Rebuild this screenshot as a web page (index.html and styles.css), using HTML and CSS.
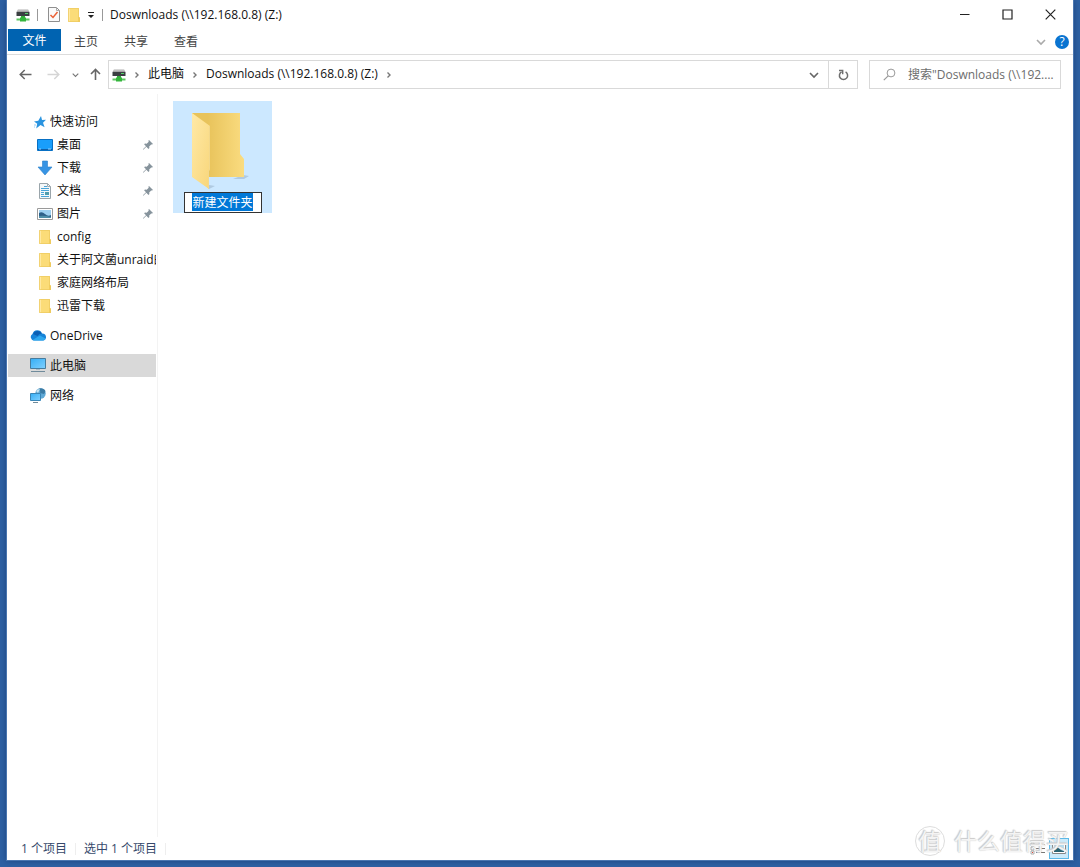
FILE: index.html
```html
<!DOCTYPE html>
<html lang="zh-CN">
<head>
<meta charset="utf-8">
<meta name="viewport" content="width=device-width, initial-scale=1">
<title>Doswnloads (\\192.168.0.8) (Z:)</title>
<link rel="stylesheet" href="styles.css">
</head>
<body>
<svg class="defs" aria-hidden="true">
  <defs>
    <linearGradient id="g-cap" x1="0" y1="0" x2="0" y2="1"><stop offset="0" stop-color="#e4e4e4"/><stop offset="1" stop-color="#9a9a9a"/></linearGradient>
    <linearGradient id="g-screen" x1="0" y1="0" x2="1" y2="1"><stop offset="0" stop-color="#35aef5"/><stop offset="1" stop-color="#7fd0ff"/></linearGradient>
    <linearGradient id="g-back" x1="0" y1="0" x2="1" y2="0"><stop offset="0.300" stop-color="#e8c35b"/><stop offset="1" stop-color="#fadc80"/></linearGradient>
    <linearGradient id="g-flap" x1="0" y1="0" x2="1" y2="1"><stop offset="0" stop-color="#ffe9a6"/><stop offset="1" stop-color="#f8d67a"/></linearGradient>
    <symbol id="drive" viewBox="0 0 14 14">
      <path d="M2 1h10l1.500 3H.5z" fill="url(#g-cap)"/><rect x=".5" y="4" width="13" height="4" fill="#3b3f42"/><rect x="9" y="5" width="3" height="1" fill="#54d36a"/>
      <rect x="5" y="8" width="4" height="2" fill="#35ad3d"/><rect x=".5" y="10.500" width="13" height="2" fill="#5cc760"/><rect x="4" y="9.500" width="6" height="4" fill="#35b53d"/>
    </symbol>
    <symbol id="folder" viewBox="0 0 14 16">
      <path d="M1 1h11v9l1 1v4H1z" fill="#fbdc78"/><path d="M1 1h2v14H1z" fill="#ffe9a3"/><path d="M11 10h1l1 1v4h-2z" fill="#f2cc5d"/><path d="M1.500 1.500h10v8.500l1 1v3.500h-11z" fill="none" stroke="#edc95f" stroke-width=".7"/>
    </symbol>
    <symbol id="pin" viewBox="0 0 10 10">
      <path d="M6 0l4 4-1 .6-.8-.2-2 2 .2 1.600-.9.900L3.300 6.700.6 9.600 0 9.700l.2-.8L3 6.200 1.100 4.300 2 3.500l1.700.2 2-2L5.400.8z" fill="#86939c"/>
    </symbol>
    <symbol id="chev-right" viewBox="0 0 6 8"><path d="M1.500 1.500L4 4 1.500 6.500" fill="none" stroke="#777" stroke-width="1.400"/></symbol>
    <symbol id="chev-down" viewBox="0 0 10 8"><path d="M1 2l4 4 4-4" fill="none" stroke="currentColor" stroke-width="1.600"/></symbol>
  </defs>
</svg>

<div class="window">
  <header class="titlebar">
    <svg class="ic14"><use href="#drive"/></svg>
    <span class="divider"></span>
    <button class="quick" aria-label="属性">
      <svg width="12" height="15" viewBox="0 0 12 15"><path d="M.5.500h8l3 3v11H.5z" fill="#fafafa" stroke="#8f8f8f"/><path d="M8.500.500v3h3" fill="none" stroke="#aaa"/><path d="M2.500 8l2.500 2.500L9.500 5" fill="none" stroke="#ea6136" stroke-width="1.500"/></svg>
    </button>
    <button class="quick" aria-label="新建文件夹"><svg width="14" height="16"><use href="#folder"/></svg></button>
    <button class="quick" aria-label="自定义快速访问工具栏"><svg width="8" height="8" viewBox="0 0 8 8"><path d="M1 1h6v1H1zM1 4h6L4 7z" fill="#222"/></svg></button>
    <span class="divider"></span>
    <h1 class="title">Doswnloads (\\192.168.0.8) (Z:)</h1>
    <div class="caption">
      <button aria-label="最小化"><svg width="11" height="11" viewBox="0 0 11 11"><path d="M1 5.500h9.500" stroke="#222" fill="none"/></svg></button>
      <button aria-label="最大化"><svg width="11" height="11" viewBox="0 0 11 11"><path d="M1 1h9v9H1z" stroke="#222" stroke-width="1.200" fill="none"/></svg></button>
      <button aria-label="关闭"><svg width="11" height="11" viewBox="0 0 11 11"><path d="M.7.700l9.600 9.600M10.300.700L.7 10.300" stroke="#222" stroke-width="1.200" fill="none"/></svg></button>
    </div>
  </header>

  <nav class="ribbon">
    <button class="tab tab-file">文件</button>
    <button class="tab">主页</button>
    <button class="tab">共享</button>
    <button class="tab">查看</button>
    <div class="ribbon-end">
      <button class="expand" aria-label="展开功能区"><svg width="10" height="8"><use href="#chev-down"/></svg></button>
      <button class="help" aria-label="帮助">?</button>
    </div>
  </nav>

  <div class="navrow">
    <button class="nav-back" aria-label="后退"><svg width="13" height="11" viewBox="0 0 13 11"><path d="M12.500 5.500H1.500M5.700 1L1.200 5.500 5.700 10" fill="none" stroke="#666" stroke-width="1.500"/></svg></button>
    <button class="nav-next" aria-label="前进"><svg width="13" height="11" viewBox="0 0 13 11"><path d="M.5 5.500h11M7.300 1l4.500 4.500L7.300 10" fill="none" stroke="#d5d5d5" stroke-width="1.500"/></svg></button>
    <button class="nav-recent" aria-label="最近浏览的位置"><svg width="7" height="6"><use href="#chev-down"/></svg></button>
    <button class="nav-up" aria-label="上移"><svg width="11" height="13" viewBox="0 0 11 13"><path d="M5.500 12V1.500M1 6l4.500-4.500L10 6" fill="none" stroke="#666" stroke-width="1.600"/></svg></button>
    <div class="address">
      <svg class="ic14"><use href="#drive"/></svg>
      <svg class="sep"><use href="#chev-right"/></svg>
      <button class="crumb">此电脑</button>
      <svg class="sep"><use href="#chev-right"/></svg>
      <button class="crumb">Doswnloads (\\192.168.0.8) (Z:)</button>
      <svg class="sep"><use href="#chev-right"/></svg>
      <button class="history" aria-label="以前的位置"><svg width="10" height="8"><use href="#chev-down"/></svg></button>
      <button class="refresh" aria-label="刷新"><svg width="11" height="12" viewBox="0 0 11 12"><path d="M3.600 2.800A4.100 4.100 0 1 0 7.600 2.900" fill="none" stroke="#6e6e6e" stroke-width="1.500"/><path d="M1 1.500h3.700v3.700" fill="none" stroke="#6e6e6e" stroke-width="1.400"/></svg></button>
    </div>
    <label class="search">
      <svg width="13" height="13" viewBox="0 0 13 13"><circle cx="8" cy="5" r="3.900" fill="none" stroke="#999"/><path d="M5.200 7.800L.8 12.200" stroke="#999" stroke-width="1.200"/></svg>
      <input type="text" aria-label="搜索" placeholder="搜索&quot;Doswnloads (\\192.168.0.8) (Z:)&quot;">
    </label>
  </div>

  <div class="body">
    <aside class="side">
      <a class="item root" href="#"><svg width="12" height="13" viewBox="0 0 12 13"><path d="M7 0l1 4 4-.3-3 3.100 1.600 4.500L6.500 9 2.200 12.500l1-4.700L0 5.500l4.300-.8z" fill="#2a94e0"/><path d="M0 9h2M0 11h1" stroke="#7cc1f2" stroke-width=".8"/></svg><span>快速访问</span></a>
      <a class="item" href="#"><svg width="16" height="12" viewBox="0 0 16 12"><path d="M.5.500h15v11H.5z" fill="#199efb" stroke="#0870c4"/><path d="M1 10h14v1H1z" fill="#0f5fa8"/><path d="M2 10h2M11 10h3" stroke="#8fd1ff"/></svg><span>桌面</span><svg class="pin"><use href="#pin"/></svg></a>
      <a class="item" href="#"><svg width="16" height="16" viewBox="0 0 16 16"><path d="M5.500 1h5v6H15l-7 8-7-8h4.500z" fill="#3794e4" stroke="#2a7fca" stroke-width=".6"/></svg><span>下载</span><svg class="pin"><use href="#pin"/></svg></a>
      <a class="item" href="#"><svg width="16" height="16" viewBox="0 0 16 16"><path d="M2.500.500h8l3 3v12h-11z" fill="#f4f8fa" stroke="#9aa5ab"/><path d="M10.500.500v3h3" fill="none" stroke="#a3adb2"/><path d="M7 3.500h3M4 5.500h8M4 7.500h8M4 9.500h3M4 11.500h3M4 13.500h8" stroke="#4aa5d8"/><path d="M8 9h4v3H8z" fill="#4e9cae"/></svg><span>文档</span><svg class="pin"><use href="#pin"/></svg></a>
      <a class="item" href="#"><svg width="16" height="12" viewBox="0 0 16 12"><path d="M.5.500h15v11H.5z" fill="#fff" stroke="#9a9a9a"/><path d="M2 2h12v8H2z" fill="#9ed0f0"/><path d="M2 5q3-2 6 1t6 1v3H2z" fill="#2f6189"/><path d="M2 8q5-1 12 1v1H2z" fill="#4f8fa8"/></svg><span>图片</span><svg class="pin"><use href="#pin"/></svg></a>
      <a class="item" href="#"><svg width="16" height="16"><use href="#folder"/></svg><span>config</span></a>
      <a class="item" href="#"><svg width="16" height="16"><use href="#folder"/></svg><span>关于阿文菌unraid的</span></a>
      <a class="item" href="#"><svg width="16" height="16"><use href="#folder"/></svg><span>家庭网络布局</span></a>
      <a class="item" href="#"><svg width="16" height="16"><use href="#folder"/></svg><span>迅雷下载</span></a>
      <a class="item root apart" href="#"><svg width="16" height="11" viewBox="0 0 16 11"><path d="M4 10.500A3.500 3.500 0 0 1 2.500 4 5 5 0 0 1 12 3.500a3.600 3.600 0 0 1 1.500 7z" fill="#1683d8"/><path d="M3 4A5 5 0 0 1 11.800 3.400Q9 3.500 7.500 6z" fill="#0a5fb4"/><path d="M2.500 10L10 5.500l5.500 3q-.5 2-2.500 2H4q-1 0-1.500-.5z" fill="#2ea8ee"/></svg><span>OneDrive</span></a>
      <a class="item root apart current" href="#"><svg width="16" height="15" viewBox="0 0 16 15"><path d="M.5.500h15v10H.5z" fill="url(#g-screen)" stroke="#467c9e"/><path d="M6 11h4v1H6z" fill="#a9bcc8"/><path d="M1 13.500h14" stroke="#708b9b"/></svg><span>此电脑</span></a>
      <a class="item root apart" href="#"><svg width="16" height="15" viewBox="0 0 16 15"><circle cx="10.500" cy="5.500" r="5.200" fill="#5fa9d6"/><path d="M8 1q3 1 2 4l4 1q2-2 1-4-3-3-7-1z" fill="#3b7ca6"/><path d="M6 3q2-2 4-2l-2 4z" fill="#c9e5f2"/><path d="M.5 5.500h10v7h-10z" fill="url(#g-screen)" stroke="#3a86b6"/><path d="M3 14.500h5" stroke="#708b9b"/></svg><span>网络</span></a>
    </aside>
    <main class="files">
      <div class="tile">
        <svg class="big" width="64" height="80" viewBox="0 0 64 80"><path d="M56 64l6 1-5 3H46zM22 74l6 1-6 3z" fill="#7b93aa" opacity=".35"/><path d="M5 2h48v41l4 5v18H5z" fill="url(#g-back)"/><path d="M5 2l18 13v43l-1 2v18L5 66z" fill="url(#g-flap)"/><path d="M22.500 15v43l-1 2v18" fill="none" stroke="#f3d88c"/></svg>
        <input class="rename" type="text" aria-label="文件夹名称" value="新建文件夹">
      </div>
    </main>
  </div>

  <footer class="status">
    <span>1 个项目</span><span class="bar"></span><span>选中 1 个项目</span><span class="bar"></span>
    <div class="views">
      <button aria-label="详细信息"><svg width="16" height="13" viewBox="0 0 16 13"><path d="M1 1h3v3H1zM1 5h3v3H1zM1 9h3v3H1z" fill="#fff" stroke="#999" stroke-width=".8"/><path d="M2 10h1v1H2z" fill="#e04a3a"/><path d="M6 2.500h4M11 2.500h4M6 6.500h4M11 6.500h4M6 10.500h4M11 10.500h4" stroke="#777"/></svg></button>
      <button class="on" aria-label="大图标"><svg width="14" height="11" viewBox="0 0 14 11"><path d="M.5.500h13v10H.5z" fill="#fff" stroke="#888"/><path d="M2 2h10v7H2z" fill="#b5def2"/><path d="M2 6q4-3 7 1l3 1v1H2z" fill="#286372"/></svg></button>
    </div>
  </footer>
  <div class="watermark" aria-hidden="true"><span class="seal">值</span><span>什么值得买</span></div>
</div>
<script src="script.js"></script>
</body>
</html>
```
FILE: styles.css
```css
* { box-sizing: border-box; }
html, body { height: 100%; margin: 0; }
body {
  padding: 0 6px 6px;
  background: #2e61a3;
  color: #111;
  font: 12px/16px "Open Sans", "Noto Sans CJK SC", sans-serif;
}
button, input { font: inherit; color: inherit; border: 0; background: none; padding: 0; margin: 0; }
button { display: flex; align-items: center; justify-content: center; }
svg { display: block; flex: none; }
.defs { position: absolute; width: 0; height: 0; }
.ic14 { width: 14px; height: 14px; }

.window {
  position: relative;
  display: flex;
  flex-direction: column;
  height: 100%;
  background: #fff;
  border: 1px solid #4a76b0;
  border-top: 0;
  box-shadow: 0 0 6px #1c4680;
}

.titlebar { display: flex; align-items: center; height: 29px; padding: 0 1px 0 9px; }
.divider { width: 1px; height: 12px; background: #999; margin: 0 7px; }
.quick { height: 20px; margin-left: 3px; margin-right: 5px; }
.quick + .quick { margin-left: 2px; margin-right: 6px; }
.titlebar .quick + .divider { margin: 0 7px 0 1px; }
.quick + .quick + .quick { margin-left: 0; }
.title { margin: 0; font: inherit; }
.caption { display: flex; margin-left: auto; }
.caption button { width: 43px; height: 28px; }

.ribbon { display: flex; height: 26px; padding-left: 1px; border-bottom: 1px solid #dcdcdc; }
.tab { width: 50px; height: 25px; color: #444; }
.tab-file { width: 53px; height: 22px; padding-top: 1px; background: #0063b1; color: #fff; }
.ribbon-end { display: flex; align-items: center; gap: 9px; margin-left: auto; padding-right: 4px; }
.expand { color: #aaa; }
.help { width: 14px; height: 14px; border-radius: 50%; background: #0a74d1; color: #fff; }

.navrow { display: flex; align-items: center; height: 39px; padding: 0 12px; }
.nav-back { margin-right: 15px; }
.nav-next { margin-right: 12px; }
.nav-recent { margin-right: 11px; color: #777; }
.nav-up { margin-right: 7px; }
.address { flex: 1; display: flex; align-items: center; height: 29px; border: 1px solid #d9d9d9; padding-left: 3px; }
.crumb { padding-bottom: 1px; }
.sep { width: 6px; height: 8px; margin: 0 8px; }
.history { margin-left: auto; margin-right: 9px; color: #666; }
.refresh { width: 29px; height: 27px; border-left: 1px solid #d9d9d9; }
.search { display: flex; align-items: center; gap: 12px; width: 192px; height: 29px; margin-left: 11px; padding: 0 0 0 13px; border: 1px solid #d9d9d9; }
.search input { flex: 1; min-width: 0; text-overflow: ellipsis; outline: 0; }
.search input::placeholder { color: #6d6d6d; opacity: 1; }

.body { flex: 1; display: flex; min-height: 0; }
.side { width: 151px; padding: 17px 1px 0; border-right: 1px solid #f3f3f3; }
.item { display: flex; align-items: center; gap: 4px; height: 23px; padding-left: 29px; color: inherit; text-decoration: none; }
.item span { flex: 1; overflow: hidden; white-space: nowrap; }
.item.root { padding-left: 22px; }
.item.root:first-child { height: 22px; padding-left: 26px; }
.item.apart { margin-top: 7px; }
.item.current { background: #d9d9d9; }
.pin { width: 10px; height: 10px; margin-right: 3px; }

.files { flex: 1; padding: 7px 15px; }
.tile { display: flex; flex-direction: column; align-items: center; width: 99px; height: 112px; padding-top: 10px; background: #cce8ff; }
.big { margin-right: 8px; }
.rename { width: 78px; height: 21px; margin-top: 1px; padding-bottom: 1px; border: 1px solid #333; background: #fff; text-align: center; outline: 0; }
.rename::selection { background: #0078d7; color: #fff; }

.status { display: flex; align-items: center; height: 23px; padding-left: 14px; color: #36496b; }
.bar { width: 1px; height: 12px; margin: 0 8px; background: #eee; }
.views { display: flex; align-items: center; gap: 1px; margin-left: auto; padding-right: 4px; }
.views button { width: 20px; height: 21px; }
.views .on { background: #cbeafa; border: 1px solid #5bb9e8; }

.watermark {
  position: absolute;
  right: 4px;
  bottom: 3px;
  display: flex;
  align-items: center;
  gap: 9px;
  color: #f4f4f4;
  font-size: 23px;
  line-height: 32px;
  text-shadow: 0 0 1px #bbb, -1px -1px 1px #ccc;
  pointer-events: none;
}
.seal { width: 30px; height: 30px; line-height: 28px; text-align: center; border: 1px solid #ddd; border-radius: 50%; }
```
FILE: script.js
```js
const rename = document.querySelector(".rename");
rename.focus();
rename.select();
```
